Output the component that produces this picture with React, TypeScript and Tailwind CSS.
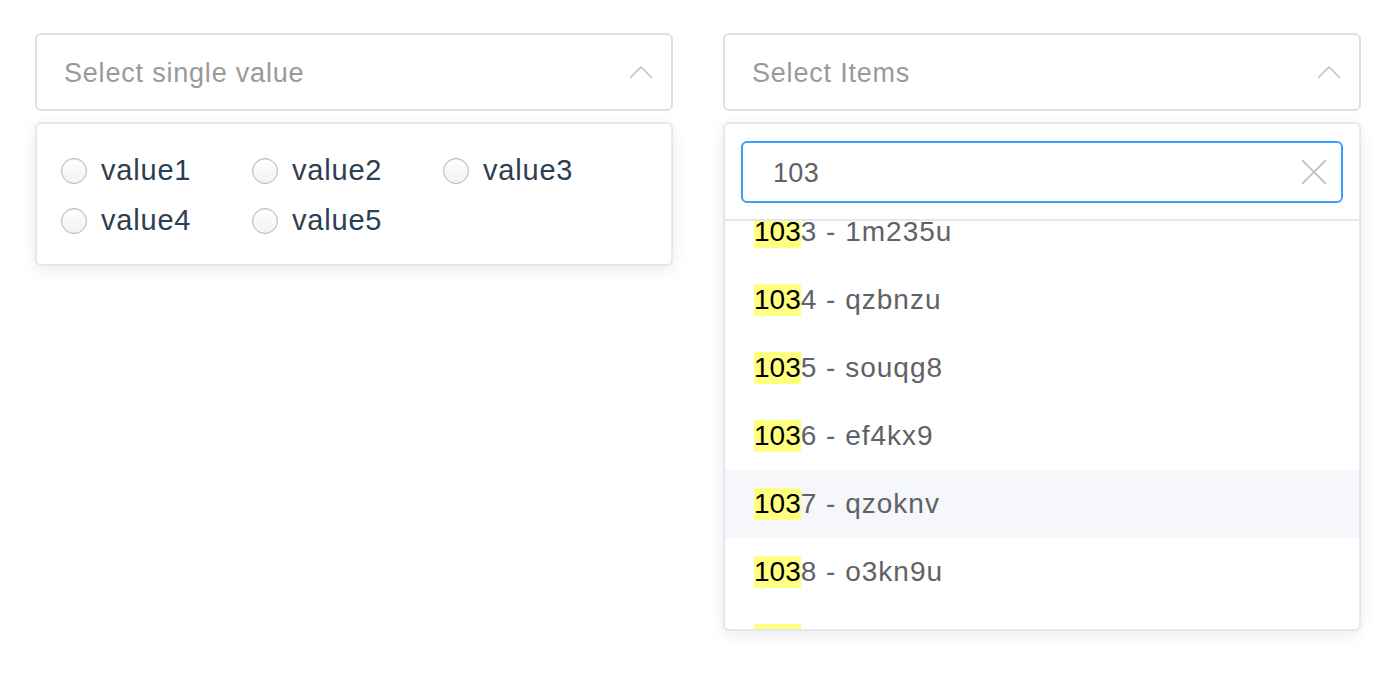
import React from 'react';

const options = ['value1', 'value2', 'value3', 'value4', 'value5'];

const items = [
  { id: '1033', code: '1m235u' },
  { id: '1034', code: 'qzbnzu' },
  { id: '1035', code: 'souqg8' },
  { id: '1036', code: 'ef4kx9' },
  { id: '1037', code: 'qzoknv' },
  { id: '1038', code: 'o3kn9u' },
  { id: '1039', code: 'a7d2wk' },
];

function ChevronUp() {
  return (
    <svg width="24" height="14" viewBox="0 0 24 14" fill="none" stroke="#c0c4cc" strokeWidth="1.6">
      <path d="M1 13 L12 2 L23 13" />
    </svg>
  );
}

function Radio() {
  return (
    <span className="inline-block shrink-0 w-[26px] h-[26px] rounded-full border border-[#b5b5b5] bg-gradient-to-b from-white to-[#f2f2f2] shadow-[inset_0_1px_1px_rgba(0,0,0,0.08)]" />
  );
}

function SelectBox({ placeholder }: { placeholder: string }) {
  return (
    <div className="h-[78px] rounded-[6px] border-2 border-[#dcdfe6] bg-white flex items-center justify-between pl-[27px] pr-[18px]">
      <span className="text-[27px] tracking-[0.8px] text-[#9a9a9a] pt-[2px]">{placeholder}</span>
      <ChevronUp />
    </div>
  );
}

export default function App() {
  return (
    <div className="min-h-screen bg-white" style={{ fontFamily: '"Liberation Sans", Arial, sans-serif' }}>
      <div className="flex gap-[50px] pl-[35px] pt-[33px]">
        {/* single select */}
        <div className="w-[638px]">
          <SelectBox placeholder="Select single value" />
          <div className="mt-[11px] rounded-[6px] border-2 border-[#e4e7ed] bg-white shadow-[0_4px_16px_rgba(0,0,0,0.08)] pl-[24px] pt-[24px] pb-[20px]">
            <div className="grid grid-cols-[191px_191px_191px] gap-y-[4px]">
              {options.map((o) => (
                <label key={o} className="flex items-center h-[46px] gap-[14px]">
                  <Radio />
                  <span className="text-[29px] tracking-[0.8px] text-[#2c3e50]">{o}</span>
                </label>
              ))}
            </div>
          </div>
        </div>

        {/* multi select with search */}
        <div className="w-[638px]">
          <SelectBox placeholder="Select Items" />
          <div className="mt-[11px] h-[509px] rounded-[6px] border-2 border-[#e4e7ed] bg-white shadow-[0_4px_16px_rgba(0,0,0,0.08)] flex flex-col overflow-hidden">
            <div className="px-[16px] pt-[17px] pb-[16px] border-b-2 border-[#e4e7ed]">
              <div className="h-[62px] rounded-[6px] border-2 border-[#409eff] flex items-center justify-between pl-[30px] pr-[14px]">
                <span className="text-[27px] tracking-[0.3px] text-[#606266] pt-[2px]">103</span>
                <svg width="26" height="26" viewBox="0 0 26 26" stroke="#c0c4cc" strokeWidth="1.8">
                  <path d="M1 1 L25 25 M25 1 L1 25" />
                </svg>
              </div>
            </div>
            <div className="flex-1 overflow-hidden">
              <div className="-mt-[23px]">
                {items.map((it) => (
                  <div
                    key={it.id}
                    className={`h-[68px] flex items-center pl-[29px] text-[28px] text-[#606266] ${
                      it.id === '1037' ? 'bg-[#f5f7fa]' : ''
                    }`}
                  >
                    <span className="bg-[#ffff80] text-black leading-[32px]">{it.id.slice(0, 3)}</span>
                    <span className="tracking-[1px]">{it.id.slice(3)} - {it.code}</span>
                  </div>
                ))}
              </div>
            </div>
          </div>
        </div>
      </div>
    </div>
  );
}
